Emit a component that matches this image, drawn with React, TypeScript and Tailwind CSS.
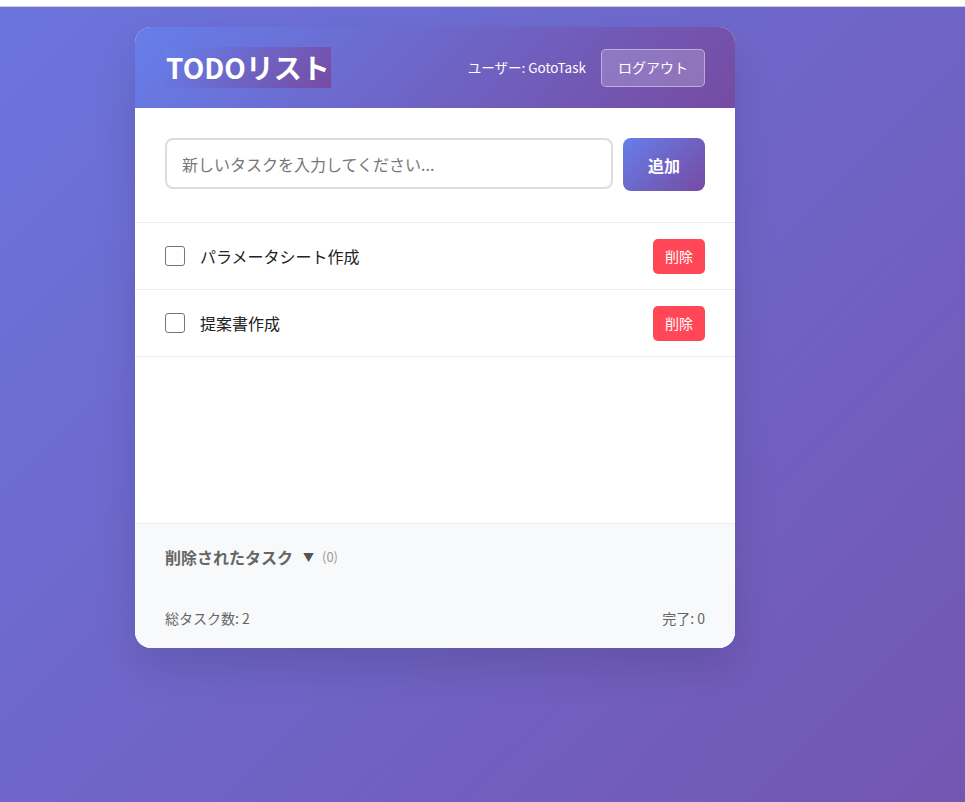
import React from "react";

const font = { fontFamily: '"Noto Sans CJK JP", "Noto Sans", sans-serif' };

function Row({ text }: { text: string }) {
  return (
    <div className="flex items-center h-[67px] px-[30px] border-b border-[#eeeeee]">
      <span className="w-5 h-5 border border-[#767676] rounded-[3px] bg-white shrink-0" />
      <span className="ml-[15px] text-[16px] text-[#222] flex-1">{text}</span>
      <button className="h-[35px] w-[52px] bg-[#ff4757] text-white text-[14px] rounded-[5px]">削除</button>
    </div>
  );
}

export default function App() {
  return (
    <div style={font} className="w-[965px] h-[802px] flex flex-col overflow-hidden">
      <div className="h-[7px] bg-white border-b border-[#cfcfcf] shrink-0" />
      <div className="flex-1 bg-[linear-gradient(135deg,#6b74dd_0%,#7356b2_100%)] pl-[135px] pt-[20px]">
        <div className="w-[600px] bg-white rounded-[16px] overflow-hidden shadow-[0_20px_40px_rgba(0,0,0,0.12)]">
          <div className="h-[81px] px-[30px] flex items-center justify-between bg-[linear-gradient(135deg,#667eea_0%,#764ba2_100%)]">
            <h1 className="text-[28px] font-bold text-white leading-[41px] h-[41px] px-[1px] bg-[linear-gradient(135deg,#667eea_0%,#764ba2_100%)]">TODOリスト</h1>
            <div className="flex items-center">
              <span className="text-white text-[13.5px] mr-[15px]">ユーザー: GotoTask</span>
              <button className="h-[38px] w-[104px] text-white text-[14px] rounded-[5px] bg-white/20 border border-white/40">ログアウト</button>
            </div>
          </div>
          <div className="px-[30px] pt-[30px] pb-[31px] flex items-start gap-[10px] border-b border-[#eeeeee]">
            <div className="flex-1 h-[51px] border-2 border-[#dddddd] rounded-[8px] px-[15px] flex items-center text-[16px] text-[#777]">新しいタスクを入力してください...</div>
            <button className="w-[82px] h-[53px] rounded-[8px] text-white font-bold text-[16px] bg-[linear-gradient(135deg,#667eea_0%,#764ba2_100%)]">追加</button>
          </div>
          <div className="min-h-[300px]">
            <Row text="パラメータシート作成" />
            <Row text="提案書作成" />
          </div>
          <div className="bg-[#f8f9fa] border-t border-[#eeeeee] px-[30px]">
            <div className="h-[66px] flex items-center">
              <span className="text-[16px] font-bold text-[#666]">削除されたタスク</span>
              <span className="ml-[10px] text-[11px] text-[#555]">▼</span>
              <span className="ml-[8px] text-[13px] text-[#999]">(0)</span>
            </div>
            <div className="h-[58px] flex items-center justify-between text-[14px] text-[#666] pb-[1px]">
              <span>総タスク数: 2</span>
              <span>完了: 0</span>
            </div>
          </div>
        </div>
      </div>
    </div>
  );
}
